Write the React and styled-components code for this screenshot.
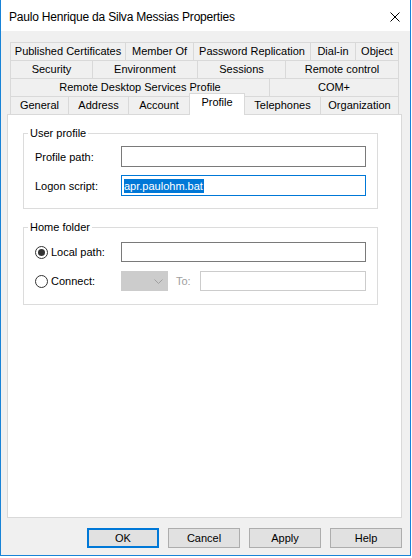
import React from 'react'
import styled, { createGlobalStyle } from 'styled-components'

const GlobalStyle = createGlobalStyle`
  body {
    margin: 0;
    background: #ffffff;
    font-family: "Liberation Sans", Arial, sans-serif;
    font-size: 11px;
    color: #000;
  }
`

const Win = styled.div`
  box-sizing: border-box;
  width: 411px;
  height: 556px;
  border: 1px solid #1883d7;
  border-top: none;
  background: #f0f0f0;
  display: flex;
  flex-direction: column;
`

const TitleBar = styled.div`
  height: 31px;
  flex: 0 0 31px;
  background: #fff;
  display: flex;
  align-items: center;
  justify-content: space-between;
  padding: 2px 10px 0 8px;
  box-sizing: border-box;
`

const Title = styled.div`
  font-size: 12px;
  letter-spacing: -0.2px;
  color: #000;
`

const Body = styled.div`
  padding: 11px 8px 0 6px;
  display: flex;
  flex-direction: column;
`

const TabStrip = styled.div`
  margin: 0 3px;
  display: flex;
  flex-direction: column;
`

const TabRow = styled.div`
  display: flex;
  height: ${p => (p.$last ? '21px' : '18px')};
  margin-top: ${p => (p.$last ? '-3px' : '0')};
  align-items: flex-end;
`

const Tab = styled.div`
  box-sizing: border-box;
  width: ${p => p.$w}px;
  height: ${p => (p.$active ? '22px' : '18px')};
  margin-bottom: ${p => (p.$active ? '-1px' : '0')};
  position: ${p => (p.$active ? 'relative' : 'static')};
  z-index: ${p => (p.$active ? 2 : 'auto')};
  background: ${p => (p.$active ? '#fff' : '#f0f0f0')};
  border-top: 1px solid #d9d9d9;
  border-left: ${p => (p.$noLeft ? 'none' : '1px solid #d9d9d9')};
  border-right: ${p => (p.$right ? '1px solid #d9d9d9' : 'none')};
  text-align: center;
  line-height: 17px;
  white-space: nowrap;
`

const Panel = styled.div`
  box-sizing: border-box;
  height: 404px;
  background: #fff;
  border: 1px solid #d9d9d9;
  padding: 12px 23px 0 15px;
`

const Group = styled.fieldset`
  margin: ${p => p.$mt || 0}px 0 0 0;
  padding: 0 11px ${p => p.$pb}px 11px;
  border: 1px solid #dcdcdc;
  min-width: 0;
`

const Legend = styled.legend`
  margin-left: -7px;
  padding: 0 2px;
  line-height: 13px;
  font-size: 11px;
`

const Rows = styled.div`
  display: flex;
  flex-direction: column;
  gap: ${p => p.$gap}px;
  margin-top: ${p => p.$mt}px;
`

const Row = styled.div`
  display: flex;
  align-items: center;
`

const Label = styled.div`
  width: 86px;
  flex: 0 0 86px;
  display: flex;
  align-items: center;
  color: ${p => (p.$disabled ? '#a0a0a0' : '#000')};
`

const TextBox = styled.div`
  box-sizing: border-box;
  width: ${p => (p.$w ? p.$w + 'px' : 'auto')};
  flex: ${p => (p.$w ? '0 0 auto' : '1 1 auto')};
  height: ${p => p.$h}px;
  background: #fff;
  border: 1px solid
    ${p => (p.$focused ? '#0078d7' : p.$disabled ? '#cccccc' : '#7a7a7a')};
  padding-left: 2px;
  display: flex;
  align-items: center;
`

const Selected = styled.span`
  background: #0078d7;
  color: #fff;
  line-height: 14px;
  padding-right: 1px;
`

const Radio = styled.span`
  box-sizing: border-box;
  width: 13px;
  height: 13px;
  border-radius: 50%;
  border: 1px solid #333;
  margin-right: 3px;
  display: inline-flex;
  align-items: center;
  justify-content: center;
  &::after {
    content: '';
    width: 7px;
    height: 7px;
    border-radius: 50%;
    background: ${p => (p.$checked ? '#333' : 'transparent')};
  }
`

const Combo = styled.div`
  box-sizing: border-box;
  width: 47px;
  height: 20px;
  background: #cccccc;
  border: 1px solid #cccccc;
  display: flex;
  align-items: center;
  justify-content: flex-end;
  padding-right: 4px;
`

const ToLabel = styled.div`
  width: 24px;
  margin-left: 8px;
  color: #a0a0a0;
`

const Buttons = styled.div`
  display: flex;
  justify-content: flex-end;
  gap: 9px;
  margin-top: 10px;
`

const Button = styled.div`
  box-sizing: border-box;
  width: 72px;
  height: 20px;
  background: #e1e1e1;
  border: ${p => (p.$default ? '2px solid #0078d7' : '1px solid #adadad')};
  display: flex;
  align-items: center;
  justify-content: center;
`

const tabRows = [
  [['Published Certificates', 115], ['Member Of', 68], ['Password Replication', 117], ['Dial-in', 45], ['Object', 44]],
  [['Security', 82], ['Environment', 105], ['Sessions', 88], ['Remote control', 114]],
  [['Remote Desktop Services Profile', 259], ['COM+', 130]],
  [['General', 58], ['Address', 60], ['Account', 61], ['Profile', 56], ['Telephones', 75], ['Organization', 79]],
]

export default function App() {
  return (
    <>
      <GlobalStyle />
      <Win>
        <TitleBar>
          <Title>Paulo Henrique da Silva Messias Properties</Title>
          <svg width="10" height="10" viewBox="0 0 10 10">
            <path d="M0.5 0.5 L9.5 9.5 M9.5 0.5 L0.5 9.5" stroke="#000" strokeWidth="1" />
          </svg>
        </TitleBar>
        <Body>
          <TabStrip>
            {tabRows.map((row, ri) => (
              <TabRow key={ri} $last={ri === 3}>
                {row.map(([name, w], ti) => (
                  <Tab
                    key={name}
                    $w={w}
                    $active={name === 'Profile'}
                    $right={name === 'Profile' || ti === row.length - 1}
                    $noLeft={name === 'Telephones'}
                  >
                    {name}
                  </Tab>
                ))}
              </TabRow>
            ))}
          </TabStrip>
          <Panel>
            <Group $pb={12}>
              <Legend>User profile</Legend>
              <Rows $gap={8} $mt={6}>
                <Row>
                  <Label>Profile path:</Label>
                  <TextBox $w={245} $h={21} />
                </Row>
                <Row>
                  <Label>Logon script:</Label>
                  <TextBox $w={245} $h={21} $focused>
                    <Selected>apr.paulohm.bat</Selected>
                  </TextBox>
                </Row>
              </Rows>
            </Group>
            <Group $pb={13} $mt={12}>
              <Legend>Home folder</Legend>
              <Rows $gap={9} $mt={8}>
                <Row>
                  <Label>
                    <Radio $checked />
                    Local path:
                  </Label>
                  <TextBox $w={245} $h={20} />
                </Row>
                <Row>
                  <Label>
                    <Radio />
                    Connect:
                  </Label>
                  <Combo>
                    <svg width="9" height="5" viewBox="0 0 9 5">
                      <path d="M0.5 0.5 L4.5 4.5 L8.5 0.5" fill="none" stroke="#a0a0a0" strokeWidth="1" />
                    </svg>
                  </Combo>
                  <ToLabel>To:</ToLabel>
                  <TextBox $h={20} $disabled />
                </Row>
              </Rows>
            </Group>
          </Panel>
          <Buttons>
            <Button $default>OK</Button>
            <Button>Cancel</Button>
            <Button>Apply</Button>
            <Button>Help</Button>
          </Buttons>
        </Body>
      </Win>
    </>
  )
}
